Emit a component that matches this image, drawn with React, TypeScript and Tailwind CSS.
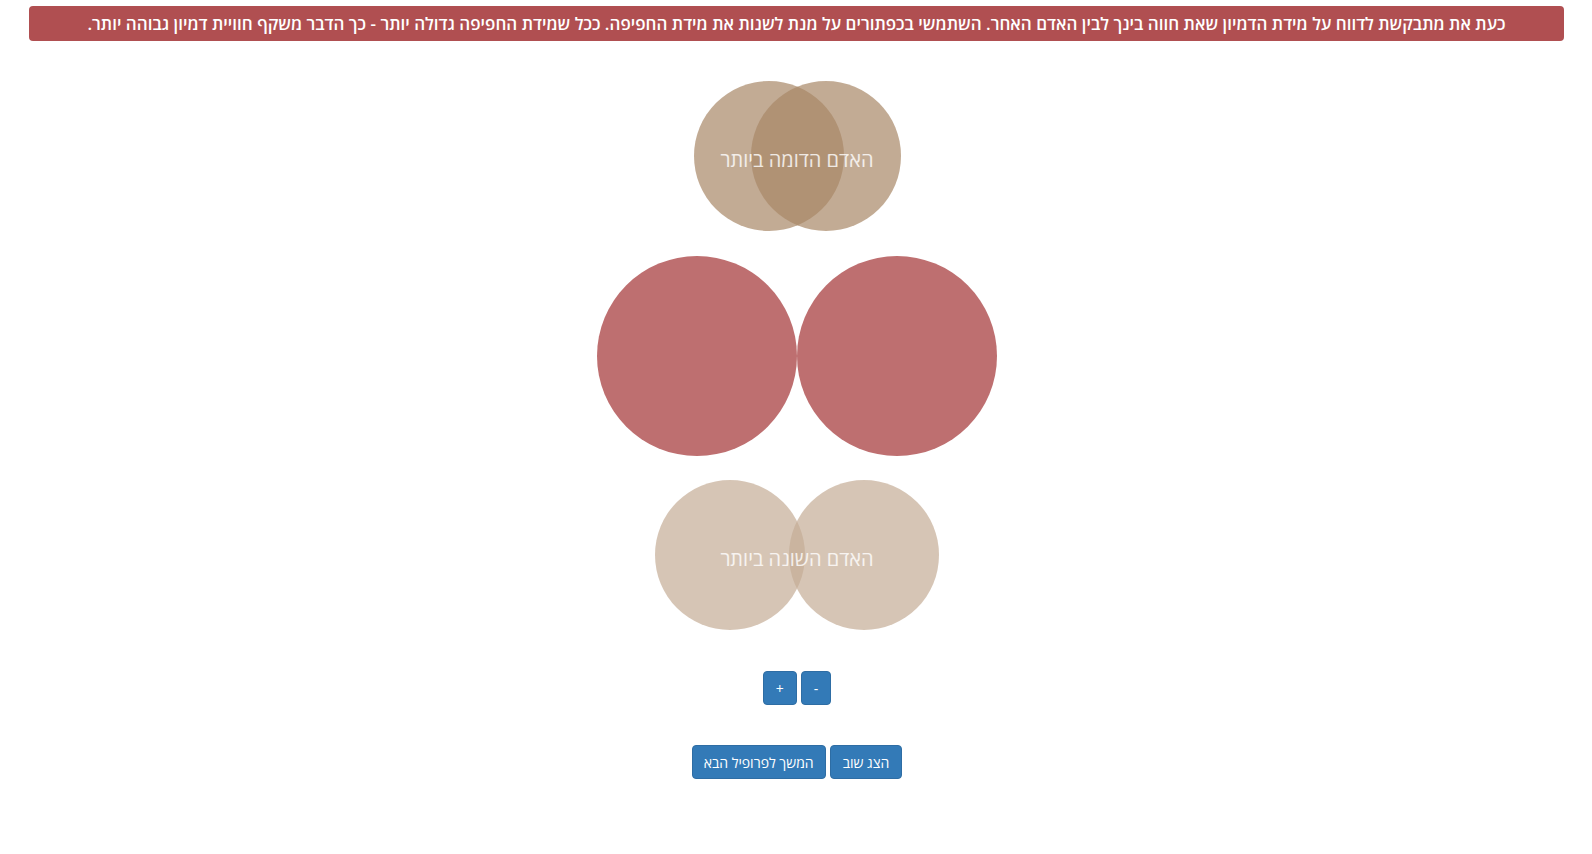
import React, { useState } from "react";

const font = { fontFamily: '"Open Sans", "Liberation Sans", "DejaVu Sans", sans-serif' };

const App = () => {
  const [size, setSize] = useState(0);

  return (
    <div className="min-h-screen bg-white pt-[6px]" style={font}>
      {/* Instructions banner */}
      <div
        dir="rtl"
        className="ml-[29px] mr-[28px] h-[35px] flex items-center justify-center rounded-[4px] bg-[#b04f51] text-white text-[17px] font-semibold"
      >
        כעת את מתבקשת לדווח על מידת הדמיון שאת חווה בינך לבין האדם האחר. השתמשי בכפתורים על מנת לשנות את מידת החפיפה. ככל שמידת החפיפה גדולה יותר - כך הדבר משקף חוויית דמיון גבוהה יותר.
      </div>

      <div className="flex flex-col items-center pt-[40px] pl-[2px]">
        {/* Most similar person */}
        <div className="relative flex" dir="ltr">
          <div className="w-[150px] h-[150px] rounded-full bg-[#a88866]/70" />
          <div className="w-[150px] h-[150px] rounded-full bg-[#a88866]/70 -ml-[93px]" />
          <div
            dir="rtl"
            className="absolute inset-0 flex items-center justify-center pt-[8px] text-[20px] text-white/80"
          >
            האדם הדומה ביותר
          </div>
        </div>

        {/* Self and other */}
        <div className="flex mt-[25px]" dir="ltr">
          <div
            className="w-[200px] h-[200px] rounded-full bg-[#be6f70]"
            style={{ transform: `translateX(${-size}px)` }}
          />
          <div
            className="w-[200px] h-[200px] rounded-full bg-[#be6f70]"
            style={{ transform: `translateX(${size}px)` }}
          />
        </div>

        {/* Least similar person */}
        <div className="relative flex mt-[24px]" dir="ltr">
          <div className="w-[150px] h-[150px] rounded-full bg-[#c4ad96]/70" />
          <div className="w-[150px] h-[150px] rounded-full bg-[#c4ad96]/70 -ml-[16px]" />
          <div
            dir="rtl"
            className="absolute inset-0 flex items-center justify-center pt-[8px] text-[20px] text-white/80"
          >
            האדם השונה ביותר
          </div>
        </div>

        {/* Overlap controls */}
        <div className="flex gap-[4px] mt-[41px]" dir="ltr">
          <button
            onClick={() => setSize(size - 5)}
            className="h-[34px] px-[12px] rounded-[4px] border border-[#2e6da4] bg-[#337ab7] text-white text-[14px]"
          >
            +
          </button>
          <button
            onClick={() => setSize(size + 5)}
            className="h-[34px] px-[12px] rounded-[4px] border border-[#2e6da4] bg-[#337ab7] text-white text-[14px]"
          >
            -
          </button>
        </div>

        <div className="flex gap-[4px] mt-[40px]" dir="rtl">
          <button className="h-[34px] px-[12px] rounded-[4px] border border-[#2e6da4] bg-[#337ab7] text-white text-[14px]">
            הצג שוב
          </button>
          <button className="h-[34px] px-[11px] rounded-[4px] border border-[#2e6da4] bg-[#337ab7] text-white text-[14px]">
            המשך לפרופיל הבא
          </button>
        </div>
      </div>
    </div>
  );
};

export default App;
